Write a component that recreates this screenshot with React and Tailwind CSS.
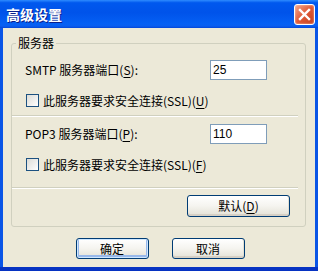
import React from "react";

function Checkbox() {
  return (
    <div className="w-[13px] h-[13px] border border-[#1C5180] bg-linear-to-br from-[#DCDCD7] to-white shrink-0" />
  );
}

function Btn({ children, w, h, def }) {
  return (
    <div
      className={
        "flex items-center justify-center rounded-[3px] border border-[#003C74] bg-linear-to-b from-white via-[#F5F4EF] to-[#E3E1D6] text-[12px] leading-none text-black " +
        (def
          ? "shadow-[inset_0_0_0_1px_#CEE7FF,inset_0_-1px_0_2px_#98B8EA]"
          : "shadow-[inset_0_-2px_0_#D6D0C5,inset_-1px_0_0_#E3E0D3]")
      }
      style={{ width: w, height: h }}
    >
      {children}
    </div>
  );
}

function U({ children }) {
  return <span className="underline underline-offset-[2px]">{children}</span>;
}

export default function App() {
  return (
    <div className="w-[318px] h-[271px] flex flex-col bg-[#0A55E6] font-['Noto_Sans_CJK_SC',sans-serif] text-black overflow-hidden">
      {/* title bar */}
      <div className="h-[28px] shrink-0 flex items-center justify-between pl-[6px] pr-[3px] bg-[linear-gradient(to_bottom,#2E8CFF_0%,#0058EE_10%,#0053EA_45%,#0560F4_85%,#0A5EF0_93%,#0346D8_100%)]">
        <span className="text-white font-bold text-[14px] leading-none [text-shadow:1px_1px_0_#0A1E8C]">
          高级设置
        </span>
        <div className="w-[21px] h-[21px] rounded-[3px] border border-white bg-linear-to-br from-[#F0A48A] via-[#DF5A37] to-[#C3401E] flex items-center justify-center shadow-[inset_0_0_2px_#FBD0C0]">
          <svg width="13" height="13" viewBox="0 0 13 13">
            <path d="M2 2 L11 11 M11 2 L2 11" stroke="white" strokeWidth="2.4" strokeLinecap="square" />
          </svg>
        </div>
      </div>
      {/* body */}
      <div className="flex-1 mx-[3px] bg-[#ECE9D8] flex flex-col">
        <fieldset className="mt-[8px] ml-[8px] w-[295px] border border-[#D0D0BF] rounded-[3px] pb-[9px] flex flex-col">
          <legend className="ml-[4px] px-[2px] text-[12px] leading-[14px]">服务器</legend>
          <div className="mt-[10px] h-[20px] flex items-center pl-[13px] pr-[38px] text-[12px]">
            <span className="flex-1">
              SMTP 服务器端口(<U>S</U>):
            </span>
            <div className="w-[57px] h-[20px] border border-[#7F9DB9] bg-white flex items-center px-[2px] text-[12px] font-['Liberation_Sans',sans-serif]">
              25
            </div>
          </div>
          <div className="mt-[14px] h-[13px] flex items-center pl-[14px] text-[12px] gap-[4px]">
            <Checkbox />
            <span className="leading-none">
              此服务器要求安全连接(SSL)(<U>U</U>)
            </span>
          </div>
          <div className="mt-[8px] mr-[7px] h-[2px] border-t border-t-[#D0D0BF] border-b border-b-white" />
          <div className="mt-[7px] h-[20px] flex items-center pl-[13px] pr-[38px] text-[12px]">
            <span className="flex-1">
              POP3 服务器端口(<U>P</U>):
            </span>
            <div className="w-[57px] h-[20px] border border-[#7F9DB9] bg-white flex items-center px-[2px] text-[12px] font-['Liberation_Sans',sans-serif]">
              110
            </div>
          </div>
          <div className="mt-[14px] h-[13px] flex items-center pl-[14px] text-[12px] gap-[4px]">
            <Checkbox />
            <span className="leading-none">
              此服务器要求安全连接(SSL)(<U>F</U>)
            </span>
          </div>
          <div className="mt-[16px] mr-[7px] h-[2px] border-t border-t-[#D0D0BF] border-b border-b-white" />
          <div className="mt-[6px] flex justify-end pr-[15px]">
            <Btn w={103} h={22}>
              默认(<U>D</U>)
            </Btn>
          </div>
        </fieldset>
        <div className="mt-[11px] flex justify-center gap-[23px] pl-[2px]">
          <Btn w={73} h={21} def>
            确定
          </Btn>
          <Btn w={73} h={21}>
            取消
          </Btn>
        </div>
      </div>
      <div className="h-[4px] shrink-0 bg-[#0733C2]" />
    </div>
  );
}
